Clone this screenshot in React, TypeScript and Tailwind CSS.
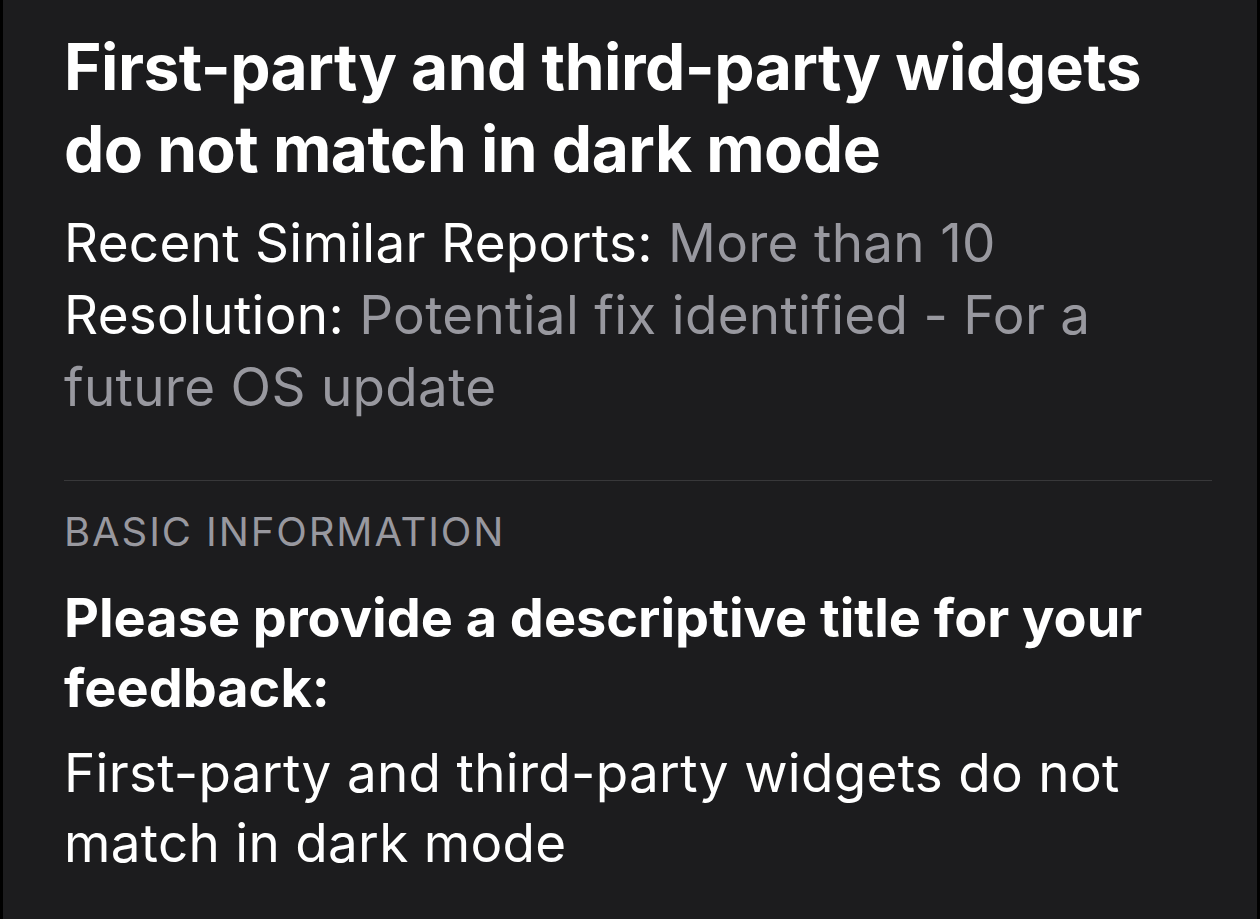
export default function App() {
  return (
    <div className="h-[919px] w-full bg-black px-[3px] font-['Inter',sans-serif]">
      <div className="h-full bg-[#1c1c1e] pl-[61px] pr-[45px] pt-[26px]">
        {/* report summary */}
        <h1 className="text-[64px] font-bold leading-[82px] tracking-[-0.5px] text-white">
          First-party and third-party widgets do not match in dark mode
        </h1>
        <div className="mt-[17px] text-[53px] leading-[72px] tracking-[0.3px] text-white">
          <p>
            Recent Similar Reports: <span className="text-[#98989f]">More than 10</span>
          </p>
          <p>
            Resolution: <span className="text-[#98989f]">Potential fix identified - For a future OS update</span>
          </p>
        </div>

        <div className="mt-[57px] h-px bg-[#38383a]" />

        <p className="mt-[27px] text-[40px] leading-[48px] tracking-[1.9px] text-[#98989f]">BASIC INFORMATION</p>
        <h2 className="mt-[27px] text-[54px] font-bold leading-[70px] text-white">
          Please provide a descriptive title for your feedback:
        </h2>
        <p className="mt-[15px] text-[53px] leading-[70px] tracking-[0.3px] text-white">
          First-party and third-party widgets do not match in dark mode
        </p>
      </div>
    </div>
  )
}
